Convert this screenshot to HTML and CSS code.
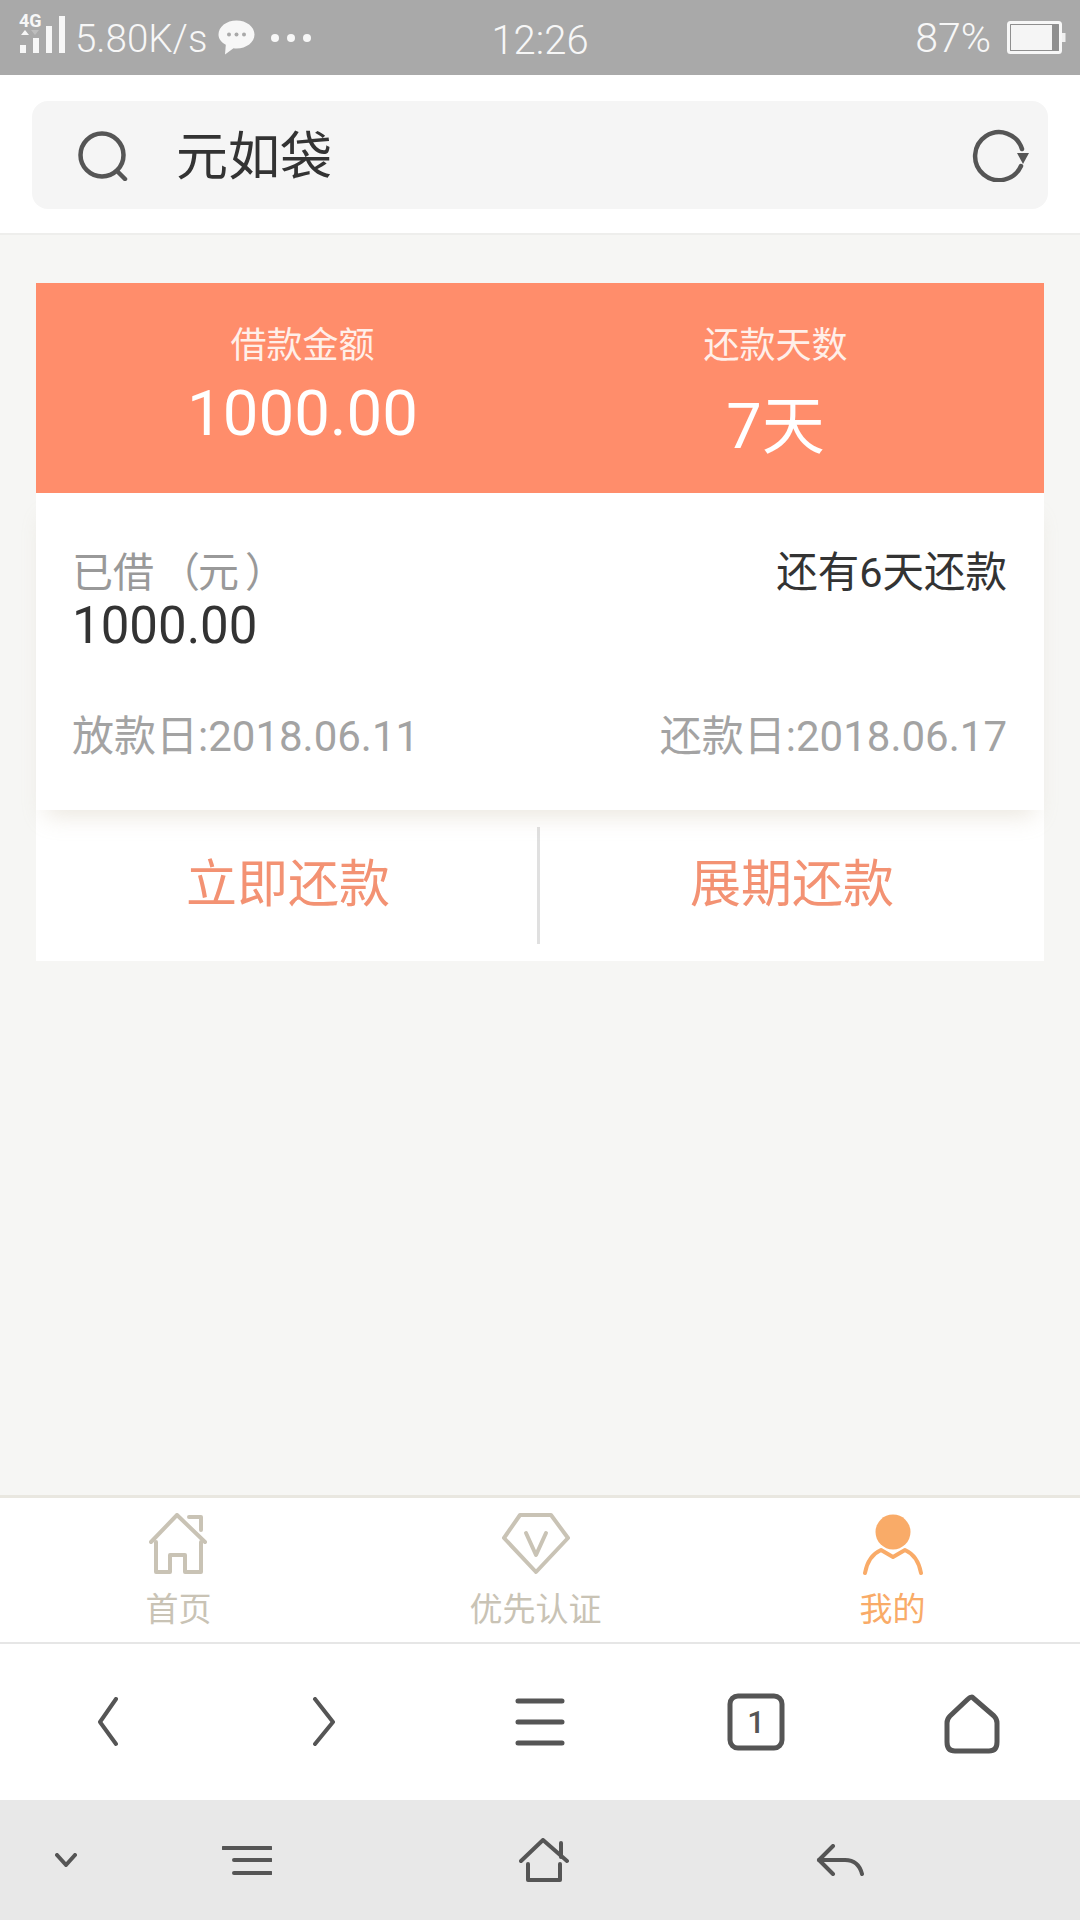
FILE: index.html
```html
<!DOCTYPE html>
<html lang="zh-CN">
<head>
    <meta charset="UTF-8">
    <meta name="viewport" content="width=device-width, initial-scale=1.0">
    <title>元如袋</title>
    <link rel="stylesheet" href="styles.css">
</head>
<body>
    <div id="container">
        <!-- 状态栏 -->
        <div class="status-bar">
            <div class="status-left">
                <svg class="signal" width="48" height="48" viewBox="0 -6 48 48">
                    <text class="signal-text" x="1" y="14">4G</text>
                    <polygon class="arrow-up" points="3,22 7,17 11,22"/>
                    <polygon class="arrow-down" points="13,17 21,17 17,22"/>
                    <rect class="bar" x="2" y="32" width="6" height="8"/>
                    <rect class="bar" x="15" y="25" width="6" height="15"/>
                    <rect class="bar" x="28" y="13" width="6" height="27"/>
                    <rect class="bar" x="41" y="3" width="6" height="37"/>
                </svg>
                <span class="speed">5.80K/s</span>
                <svg class="wechat" width="37" height="35" viewBox="0 0 37 35">
                    <path class="bubble" d="M18.500 0.500C28.500 0.500 36.500 6.800 36.500 14.500C36.500 22.200 28.500 28.500 18.500 28.500C17.500 28.500 16.500 28.400 15.500 28.300L7 34.500L7.800 24.800C3.200 22.300 0.500 18.600 0.500 14.500C0.500 6.800 8.500 0.500 18.500 0.500Z"/>
                    <circle class="bubble-dot" cx="11" cy="14.500" r="2"/>
                    <circle class="bubble-dot" cx="18.500" cy="14.500" r="2"/>
                    <circle class="bubble-dot" cx="26" cy="14.500" r="2"/>
                </svg>
                <div class="dots"><i></i><i></i><i></i></div>
            </div>
            <span class="clock">12:26</span>
            <div class="status-right">
                <span class="percent">87%</span>
                <svg class="battery" width="59" height="33" viewBox="0 0 59 33">
                    <rect class="battery-shell" x="1.500" y="1.500" width="52" height="30" rx="2"/>
                    <rect class="battery-fill" x="4" y="4" width="41" height="25"/>
                    <rect class="battery-cap" x="55" y="12" width="3.500" height="9"/>
                </svg>
            </div>
        </div>

        <!-- 地址栏 -->
        <div class="header">
            <div class="search-box">
                <svg class="search-icon" width="50" height="50" viewBox="0 0 50 50">
                    <circle cx="24" cy="24" r="21.500"/>
                    <path d="M39 40L47 48"/>
                </svg>
                <span class="search-text">元如袋</span>
                <svg class="refresh-icon" width="60" height="54" viewBox="0 0 60 54">
                    <path d="M50 38A24 24 0 1 1 51 21"/>
                    <polygon class="refresh-tip" points="46,25 58,25 52,36"/>
                </svg>
            </div>
        </div>

        <div class="main">
            <div class="card">
                <div class="card-top">
                    <div class="top-col">
                        <div class="top-label">借款金额</div>
                        <div class="top-amount">1000.00</div>
                    </div>
                    <div class="top-col">
                        <div class="top-label">还款天数</div>
                        <div class="top-days">7天</div>
                    </div>
                </div>
                <div class="card-body">
                    <div class="row">
                        <div>
                            <div class="borrowed-label">已借<span class="paren-open">（</span>元<span class="paren-close">）</span></div>
                            <div class="borrowed-amount">1000.00</div>
                        </div>
                        <div class="remain">还有6天还款</div>
                    </div>
                    <div class="row dates">
                        <span>放款日:2018.06.11</span>
                        <span>还款日:2018.06.17</span>
                    </div>
                </div>
                <div class="actions">
                    <div class="action">立即还款</div>
                    <div class="action-line"></div>
                    <div class="action">展期还款</div>
                </div>
            </div>
        </div>

        <!-- 页面底部导航 -->
        <div class="tab-bar">
            <div class="tab">
                <svg class="tab-icon" width="60" height="62" viewBox="0 0 60 62">
                    <path d="M2 29L28 2L56 29"/>
                    <path d="M40 4H52V17"/>
                    <path d="M7 29V59H21V42H36V59H52V29"/>
                </svg>
                <span class="tab-name">首页</span>
            </div>
            <div class="tab">
                <svg class="tab-icon" width="70" height="62" viewBox="0 0 70 62">
                    <polygon points="19,2 50,2 67,25 35,59 3,25"/>
                    <path d="M25 20L35 42L45 20"/>
                </svg>
                <span class="tab-name">优先认证</span>
            </div>
            <div class="tab active">
                <svg class="tab-icon" width="60" height="62" viewBox="0 0 60 62">
                    <circle class="head" cx="30" cy="19" r="17.500"/>
                    <path d="M2 60C4 49 9 41 18 37L30 44L42 37C51 41 56 49 58 60"/>
                </svg>
                <span class="tab-name">我的</span>
            </div>
        </div>

        <!-- 浏览器工具栏 -->
        <div class="nav-bar">
            <svg class="nav-icon" width="40" height="50" viewBox="0 0 40 50">
                <path d="M28 2L12 25L28 47" class="chevron"/>
            </svg>
            <svg class="nav-icon" width="40" height="50" viewBox="0 0 40 50">
                <path d="M11 2L29 25L11 47" class="chevron"/>
            </svg>
            <svg class="nav-icon" width="50" height="50" viewBox="0 0 50 50">
                <path d="M3 4H47M3 25H47M3 46H47"/>
            </svg>
            <svg class="nav-icon" width="58" height="58" viewBox="0 0 58 58">
                <rect x="3" y="3" width="52" height="52" rx="8"/>
                <text class="tab-count" x="29" y="40">1</text>
            </svg>
            <svg class="nav-icon nav-home" width="60" height="60" viewBox="0 0 60 60">
                <path d="M30 3L52 22C54 24 55 26 55 29V48C55 54 52 57 47 57H13C8 57 5 54 5 48V29C5 26 6 24 8 22L26 5C27 4 29 3 30 3Z"/>
            </svg>
        </div>

        <!-- 系统导航 -->
        <div class="system-bar">
            <svg class="sys-icon" width="22" height="14" viewBox="0 0 22 14">
                <path d="M2 2L11 12L20 2"/>
            </svg>
            <svg class="sys-icon" width="50" height="30" viewBox="0 0 50 30">
                <path d="M1 3H49M12 15H49M12 28H49"/>
            </svg>
            <svg class="sys-icon" width="50" height="44" viewBox="0 0 50 44">
                <path d="M2 23L24 2L48 23"/>
                <path d="M42 5V19"/>
                <path d="M9 26V42H41V26"/>
            </svg>
            <svg class="sys-icon" width="50" height="32" viewBox="0 0 50 32">
                <path d="M18 2L4 16L18 30"/>
                <path d="M4 16H30C40 16 45 22 47 30"/>
            </svg>
        </div>
    </div>
</body>
</html>
```

FILE: styles.css
```css
body {
    margin: 0;
    padding: 0;
    font-family: Roboto, "Noto Sans CJK SC", sans-serif;
    background-color: #FFFFFF;
}
#container {
    width: 1080px;
    height: 1920px;
    display: flex;
    flex-direction: column;
    overflow: hidden;
}
svg {
    display: block;
    fill: none;
}

/* 状态栏 */
.status-bar {
    height: 75px;
    flex: none;
    display: grid;
    grid-template-columns: 1fr auto 1fr;
    align-items: center;
    background: #A9A9A9;
    color: #F7F7F7;
    font-weight: 300;
}
.status-left {
    display: flex;
    align-items: center;
    padding-left: 18px;
}
.signal {
    margin-top: -13px;
}
.signal-text {
    font-size: 18px;
    font-weight: 700;
    fill: #F7F7F7;
}
.arrow-up, .bar {
    fill: #F7F7F7;
}
.arrow-down {
    fill: #BDBDBD;
}
.speed {
    font-size: 38.500px;
    margin-left: 9px;
    margin-top: 2px;
}
.wechat {
    margin-left: 11px;
}
.bubble {
    fill: #F7F7F7;
}
.bubble-dot {
    fill: #A9A9A9;
}
.dots {
    display: flex;
    gap: 8px;
    margin-left: 16px;
}
.dots i {
    display: block;
    width: 8px;
    height: 8px;
    border-radius: 50%;
    background: #F7F7F7;
}
.clock {
    font-size: 40px;
    margin-top: 6px;
}
.status-right {
    display: flex;
    align-items: center;
    justify-content: flex-end;
    padding-right: 14px;
}
.percent {
    font-size: 41px;
    margin-right: 16px;
}
.battery-shell {
    stroke: #F7F7F7;
    stroke-width: 3;
    fill: #8F8F8F;
}
.battery-fill {
    fill: #F5F5F5;
}
.battery-cap {
    fill: #F0F0F0;
}

/* 地址栏 */
.header {
    height: 160px;
    flex: none;
    box-sizing: border-box;
    padding: 26px 32px 0;
    border-bottom: 2px solid #EEEEEC;
    background: #FFFFFF;
}
.search-box {
    height: 108px;
    display: flex;
    align-items: center;
    background: #F5F5F5;
    border-radius: 16px;
    padding: 0 17px 0 46px;
}
.search-icon {
    stroke: #555555;
    stroke-width: 4.500;
    stroke-linecap: round;
    margin-top: 2px;
}
.search-text {
    font-size: 52px;
    color: #333333;
    margin-left: 48px;
    margin-top: -5px;
    flex: 1;
}
.refresh-icon {
    stroke: #555555;
    stroke-width: 4.500;
    stroke-linecap: round;
}
.refresh-tip {
    fill: #555555;
    stroke: none;
}

/* 借款卡片 */
.main {
    flex: 1;
    background: #F6F6F4;
    padding: 48px 36px 0;
}
.card {
    background: #FFFFFF;
}
.card-top {
    height: 210px;
    display: grid;
    grid-template-columns: 473px 473px;
    padding: 0 31px 0 30px;
    background: #FF8D6B;
    color: #FFFFFF;
    text-align: center;
}
.top-label {
    font-size: 36px;
    line-height: 44px;
    margin-top: 41px;
    color: #FFEFE9;
}
.top-amount {
    font-size: 63.500px;
    line-height: 72px;
    margin-top: 10px;
}
.top-days {
    font-size: 63px;
    line-height: 72px;
    margin-top: 23px;
}
.card-body {
    height: 317px;
    box-sizing: border-box;
    padding: 53px 37px 0 36px;
    background: #FFFFFF;
    position: relative;
    box-shadow: 0 16px 22px -10px rgba(190, 175, 150, 0.3);
}
.row {
    display: flex;
    justify-content: space-between;
}
.borrowed-label {
    font-size: 41px;
    line-height: 54px;
    color: #999999;
}
.paren-open {
    margin: 0 -2px 0 5px;
}
.paren-close {
    margin-left: 6px;
}
.borrowed-amount {
    font-size: 51px;
    line-height: 52px;
    color: #333333;
}
.remain {
    font-size: 41.500px;
    line-height: 54px;
    color: #333333;
}
.dates {
    margin-top: 57px;
    font-size: 42px;
    line-height: 56px;
    color: #A3A3A3;
}
.actions {
    height: 151px;
    display: flex;
    align-items: center;
}
.action {
    flex: 1;
    text-align: center;
    font-size: 51px;
    color: #F39273;
    margin-top: -12px;
}
.action-line {
    width: 3px;
    height: 117px;
    margin-left: -3px;
    background: #E0E0E0;
}

/* 页面底部导航 */
.tab-bar {
    height: 149px;
    flex: none;
    box-sizing: border-box;
    display: grid;
    grid-template-columns: repeat(3, 357px);
    padding-top: 15px;
    border-top: 3px solid #E9E7E0;
    border-bottom: 2px solid #E6E6E6;
    background: #FFFFFF;
}
.tab {
    display: flex;
    flex-direction: column;
    align-items: center;
    color: #C9C3B5;
}
.tab-icon {
    stroke: #C9C3B5;
    stroke-width: 4;
    stroke-linejoin: round;
    stroke-linecap: round;
}
.tab-name {
    font-size: 33px;
    line-height: 40px;
    margin-top: 15px;
}
.tab.active {
    color: #F9AB68;
}
.tab.active .tab-icon {
    stroke: #F9AB68;
}
.head {
    fill: #F9AB68;
    stroke: none;
}

/* 浏览器工具栏 */
.nav-bar {
    height: 156px;
    flex: none;
    display: grid;
    grid-template-columns: repeat(5, 216px);
    justify-items: center;
    align-items: center;
    background: #FFFFFF;
}
.nav-icon {
    stroke: #555555;
    stroke-width: 5;
    stroke-linecap: round;
    stroke-linejoin: round;
}
.nav-home {
    margin-top: 4px;
}
.chevron {
    stroke-width: 4;
}
.tab-count {
    fill: #555555;
    stroke: none;
    font-size: 31px;
    font-weight: 500;
    text-anchor: middle;
}

/* 系统导航 */
.system-bar {
    height: 120px;
    flex: none;
    display: grid;
    grid-template-columns: 132px 230px 364px 228px;
    justify-items: center;
    align-items: center;
    background: #E8E8E8;
}
.sys-icon {
    stroke: #555555;
    stroke-width: 4;
    stroke-linecap: round;
    stroke-linejoin: round;
}
```
